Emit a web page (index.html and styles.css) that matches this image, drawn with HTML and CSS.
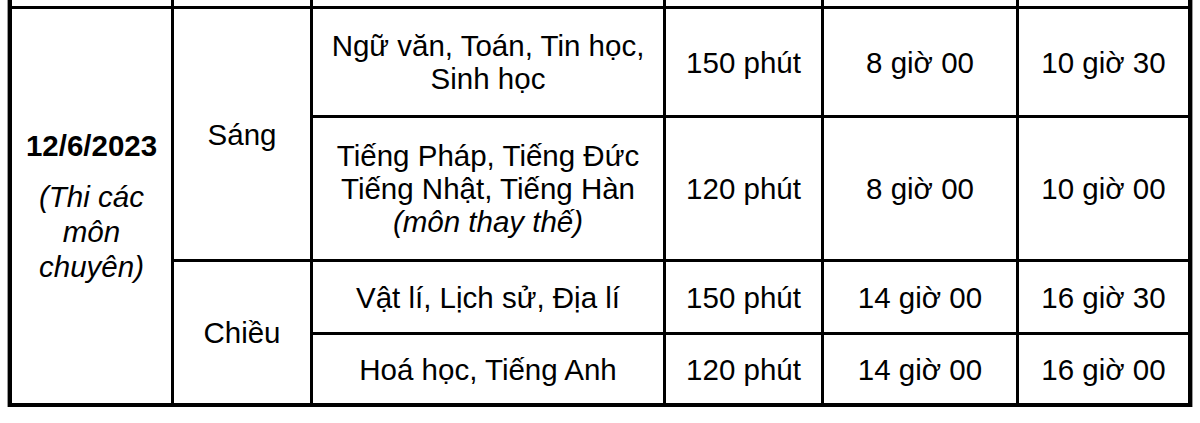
FILE: index.html
```html
<!DOCTYPE html>
<html lang="vi">
<head>
<meta charset="utf-8">
<title>Lịch thi</title>
<link rel="stylesheet" href="styles.css">
</head>
<body>
<div class="sheet">
  <div class="cell top"></div>
  <div class="cell top"></div>
  <div class="cell top"></div>
  <div class="cell top"></div>
  <div class="cell top"></div>
  <div class="cell top"></div>

  <div class="cell day">
    <div class="day-inner">
      <div class="date">12/6/2023</div>
      <div class="note">(Thi các môn chuyên)</div>
    </div>
  </div>
  <div class="cell session morning">Sáng</div>
  <div class="cell"><span class="txt">Ngữ văn, Toán, Tin học,<br>Sinh học</span></div>
  <div class="cell">150 phút</div>
  <div class="cell">8 giờ 00</div>
  <div class="cell">10 giờ 30</div>

  <div class="cell"><span class="txt">Tiếng Pháp, Tiếng Đức<br>Tiếng Nhật, Tiếng Hàn<br><em>(môn thay thế)</em></span></div>
  <div class="cell">120 phút</div>
  <div class="cell">8 giờ 00</div>
  <div class="cell">10 giờ 00</div>

  <div class="cell session afternoon">Chiều</div>
  <div class="cell">Vật lí, Lịch sử, Địa lí</div>
  <div class="cell">150 phút</div>
  <div class="cell">14 giờ 00</div>
  <div class="cell">16 giờ 30</div>

  <div class="cell">Hoá học, Tiếng Anh</div>
  <div class="cell">120 phút</div>
  <div class="cell">14 giờ 00</div>
  <div class="cell">16 giờ 00</div>
</div>
</body>
</html>
```

FILE: styles.css
```css
html, body {
  margin: 0;
  padding: 0;
  background: #fff;
}

body {
  font-family: "Liberation Sans", Arial, sans-serif;
  font-size: 29.5px;
  color: #000;
  overflow: hidden;
}

.sheet {
  display: grid;
  grid-template-columns: 159px 136px 350px 155px 192px 169px;
  grid-template-rows: 6px 106px 141px 70px 68px;
  gap: 3px;
  width: max-content;
  margin-left: 8px;
  padding: 0 4px 4px 4px;
  background: #000;
  box-shadow: 0 0 0 1px #9a9a9a;
}

.cell {
  background: #fff;
  display: flex;
  align-items: center;
  justify-content: center;
  text-align: center;
  line-height: 33px;
  white-space: nowrap;
}

.txt {
  display: block;
}

.cell em {
  font-style: italic;
}

.day {
  grid-column: 1;
  grid-row: 2 / 6;
  white-space: normal;
}

.morning {
  grid-column: 2;
  grid-row: 2 / 4;
}

.afternoon {
  grid-column: 2;
  grid-row: 4 / 6;
}

.day-inner {
  display: flex;
  flex-direction: column;
  align-items: center;
}

.date {
  font-weight: bold;
}

.note {
  font-style: italic;
  margin-top: 17px;
  padding: 0 10px;
  line-height: 35px;
}
```
